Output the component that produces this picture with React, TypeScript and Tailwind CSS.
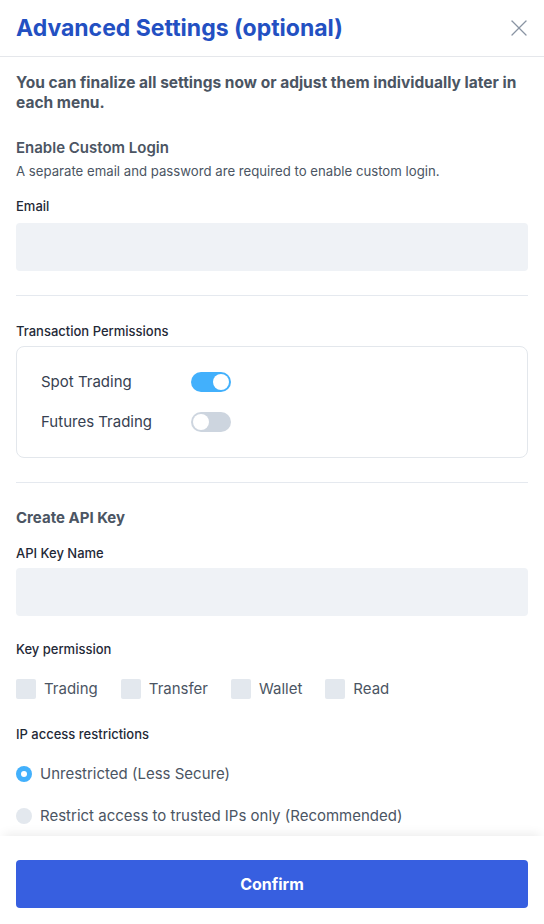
import { X } from "lucide-react";

function Toggle({ on }: { on: boolean }) {
  return (
    <div
      className={`w-10 h-5 rounded-full p-[2px] flex ${
        on ? "bg-[#42b0fc] justify-end" : "bg-[#cdd5df] justify-start"
      }`}
    >
      <div className="w-4 h-4 rounded-full bg-white" />
    </div>
  );
}

function Checkbox({ label }: { label: string }) {
  return (
    <div className="flex items-center gap-2">
      <div className="w-5 h-5 rounded-[2px] bg-[#e3e8ee]" />
      <span className="text-[15px] text-[#4b5563]">{label}</span>
    </div>
  );
}

function Radio({ label, checked }: { label: string; checked?: boolean }) {
  return (
    <div className="flex items-center gap-2">
      {checked ? (
        <div className="w-4 h-4 rounded-full bg-[#42b0fc] flex items-center justify-center">
          <div className="w-[6px] h-[6px] rounded-full bg-white" />
        </div>
      ) : (
        <div className="w-4 h-4 rounded-full bg-[#e3e8ee]" />
      )}
      <span className="text-[15px] leading-5 text-[#4b5563]">{label}</span>
    </div>
  );
}

export default function App() {
  return (
    <div
      className="w-[544px] h-[924px] bg-white flex flex-col overflow-hidden"
      style={{ fontFamily: "Inter, 'Noto Sans', sans-serif" }}
    >
      <div className="h-[57px] shrink-0 border-b border-[#e5e7eb] flex items-center justify-between pl-4 pr-[11px]">
        <h1 className="text-[23px] font-bold text-[#2350c2]">Advanced Settings (optional)</h1>
        <X className="w-7 h-7 text-[#8a94a3]" strokeWidth={1.1} />
      </div>

      <div className="flex-1 overflow-hidden px-4 pt-[16px]">
        <p className="text-[15.5px] leading-5 font-bold text-[#4b5563]">
          You can finalize all settings now or adjust them individually later in each menu.
        </p>

        <h2 className="mt-[24px] text-[15px] font-semibold text-[#4b5563]">Enable Custom Login</h2>
        <p className="mt-[2px] text-[13.2px] text-[#4b5563]">
          A separate email and password are required to enable custom login.
        </p>

        <label className="block mt-[16px] text-[13px] font-medium text-[#1f2937]">Email</label>
        <div className="mt-[6px] h-12 rounded bg-[#eff2f6]" />

        <div className="mt-6 border-t border-[#e5e9ef]" />

        <div className="mt-[26px] text-[13px] font-medium text-[#1f2937]">Transaction Permissions</div>
        <div className="mt-[5px] rounded-lg border border-[#e3e7ec] px-6 py-[25px] flex flex-col gap-5">
          <div className="flex items-center">
            <span className="w-[150px] text-[15px] leading-5 text-[#374151]">Spot Trading</span>
            <Toggle on />
          </div>
          <div className="flex items-center">
            <span className="w-[150px] text-[15px] leading-5 text-[#374151]">Futures Trading</span>
            <Toggle on={false} />
          </div>
        </div>

        <div className="mt-6 border-t border-[#e5e9ef]" />

        <h2 className="mt-[24px] text-[15px] font-bold text-[#4b5563]">Create API Key</h2>
        <label className="block mt-[14px] text-[13px] font-medium text-[#1f2937]">API Key Name</label>
        <div className="mt-[5px] h-12 rounded bg-[#eff2f6]" />

        <div className="mt-[24px] text-[13px] font-medium text-[#1f2937]">Key permission</div>
        <div className="mt-[18px] flex gap-[23px]">
          <Checkbox label="Trading" />
          <Checkbox label="Transfer" />
          <Checkbox label="Wallet" />
          <Checkbox label="Read" />
        </div>

        <div className="mt-[25px] text-[13px] font-medium text-[#1f2937]">IP access restrictions</div>
        <div className="mt-[19px] flex flex-col gap-[22px]">
          <Radio label="Unrestricted (Less Secure)" checked />
          <Radio label="Restrict access to trusted IPs only (Recommended)" />
        </div>
      </div>

      <div className="shrink-0 px-4 pt-6 pb-4 bg-white shadow-[0_-6px_10px_-4px_rgba(0,0,0,0.08)]">
        <button className="w-full h-12 rounded bg-[#375fe0] text-white text-[16px] font-bold">
          Confirm
        </button>
      </div>
    </div>
  );
}
